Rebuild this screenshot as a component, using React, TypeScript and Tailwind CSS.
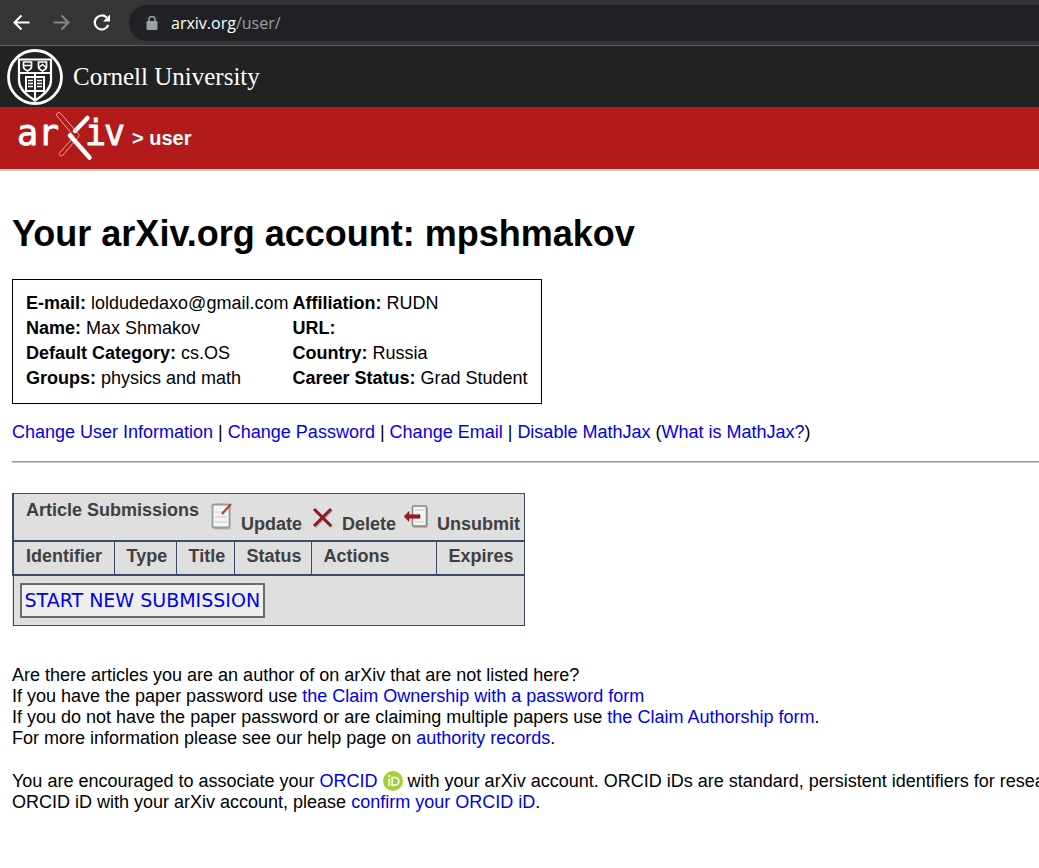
import React from "react";

const link = "text-[#0000ee]";

function BrowserBar() {
  return (
    <div className="flex h-[46px] items-center border-b border-[#5f5f5f] bg-[#353535] pl-3">
      <button aria-label="Back" className="flex w-10 text-white">
        <svg width="20" height="20" viewBox="0 0 20 20" fill="none" stroke="currentColor" strokeWidth="2">
          <path d="M17.500 9.500H2.500M9.500 2.500l-7 7 7 7" />
        </svg>
      </button>
      <button aria-label="Forward" className="flex w-10 text-[#878787]">
        <svg width="20" height="20" viewBox="0 0 20 20" fill="none" stroke="currentColor" strokeWidth="2">
          <path d="M1.500 9.500h15M9.500 2.500l7 7-7 7" />
        </svg>
      </button>
      <button aria-label="Reload" className="flex w-[37px] text-white">
        <svg width="20" height="20" viewBox="0 0 20 20" fill="none" stroke="currentColor" strokeWidth="2.200">
          <path d="M16.300 12A7 7 0 1 1 14.700 4.500" />
          <path d="M18 1.500v7h-7z" fill="currentColor" stroke="none" />
        </svg>
      </button>
      <div className="flex h-9 min-w-0 flex-1 items-center rounded-l-full bg-[#202124] pl-4">
        <svg className="mr-2 shrink-0" width="14" height="16" viewBox="0 0 14 16">
          <path d="M4 7V4.500a3 3 0 0 1 6 0V7" fill="none" stroke="#9aa0a6" strokeWidth="1.600" />
          <rect x="1.500" y="6" width="11" height="9" rx="1.200" fill="#9aa0a6" />
        </svg>
        <div className="grid min-w-0 flex-1 pl-1 font-['Open_Sans',sans-serif] text-base">
          <input
            aria-label="Address"
            type="text"
            className="col-start-1 row-start-1 min-w-0 bg-transparent text-transparent caret-white outline-none"
            defaultValue="arxiv.org/user/"
          />
          <span aria-hidden="true" className="pointer-events-none col-start-1 row-start-1 self-center text-[#9aa0a6]">
            <span className="text-white">arxiv.org</span>/user/
          </span>
        </div>
      </div>
    </div>
  );
}

function Seal() {
  return (
    <svg width="56" height="56" viewBox="0 0 56 56" fill="none" stroke="#fff">
      <circle cx="28" cy="28" r="26.500" strokeWidth="2.800" />
      <path d="M12 10.500h32v21c0 9-8 15-16 20C20 46.500 12 40.500 12 31.500z" strokeWidth="2.200" />
      <path d="M12 24h32M28 24v26" strokeWidth="2" />
      <path d="M16.500 13h8v5c0 2-2 3-4 4-2-1-4-2-4-4zM31.500 13h8v5c0 2-2 3-4 4-2-1-4-2-4-4z" strokeWidth="1.700" />
      <path d="M17 16.500h7M32 18.500l3.500-3 3.500 3" strokeWidth="1.500" />
      <path d="M19 28h8l1 1 1-1h8v14h-8l-1 1-1-1h-8z" strokeWidth="2" />
      <path d="M21 31.500h5M21 34.500h5M21 37.500h5M30 31.500h5M30 34.500h5M30 37.500h5" strokeWidth="1.500" />
    </svg>
  );
}

function ArxivLogo() {
  return (
    <svg width="110" height="54" viewBox="0 0 110 54" fill="none" role="img" aria-label="arXiv">
      <g fill="#fff" stroke="#fff" strokeWidth="0.800" fontFamily="DejaVu Sans Mono" fontSize="35" fontWeight="400">
        <text x="-1 20" y="34">ar</text>
        <text x="67 86" y="34">iv</text>
      </g>
      <path d="M69.500 7L57 20" stroke="#fff" strokeWidth="4.500" strokeLinecap="round" />
      <path
        d="M39.300 2c1-.9 2.500-.5 3.500.6L60.500 23c.8 1 .7 2-.1 3L45 44c-1 1-2 1.300-3 .5s-.8-2.100 0-3.100L56 25.500 39 5c-.8-1-.7-2.200.3-3z"
        stroke="#f0b0b0"
        strokeWidth="0.900"
      />
      <path d="M52 24.500L71.500 46.500" stroke="#fff" strokeWidth="4.500" strokeLinecap="round" />
    </svg>
  );
}

function Page({ className }: { className?: string }) {
  return (
    <svg className={className} width="24" height="30" viewBox="0 0 24 30">
      <rect x="4.500" y="5.500" width="17" height="24" rx="1.500" fill="#b8b8b8" />
      <rect x="3.500" y="4.500" width="17" height="23" rx="1.500" fill="#f4f4f4" stroke="#9a9a9a" strokeWidth="1.800" />
      <path d="M6 12h8M6 17h12M6 22h12" stroke="#c8c8c8" />
      <path d="M13 14l9-10" stroke="#b33c3c" strokeWidth="2.200" />
    </svg>
  );
}

function Cross({ className }: { className?: string }) {
  return (
    <svg className={className} width="22" height="24" viewBox="0 0 22 24" strokeWidth="3">
      <path d="M3 4l17 17M20 4L3 21" stroke="#a9a9a9" />
      <path d="M2 3l17 17M19 3L2 20" stroke="#8f1a1f" />
    </svg>
  );
}

function Unsubmit({ className }: { className?: string }) {
  return (
    <svg className={className} width="25" height="26" viewBox="0 0 25 26">
      <rect x="9" y="3" width="15" height="21" rx="1" fill="#b5b5b5" />
      <rect x="8.500" y="2" width="14" height="20" rx="1" fill="#f4f4f4" stroke="#858585" strokeWidth="1.500" />
      <path d="M11 6h9M11 18h9" stroke="#ccc" />
      <path d="M0 12.500l5-5v3.200h11v3.600H5v3.200z" fill="#a3181d" stroke="#6d1215" strokeWidth="0.500" />
    </svg>
  );
}

const profile = [
  ["E-mail:", "loldudedaxo@gmail.com", "Affiliation:", "RUDN"],
  ["Name:", "Max Shmakov", "URL:", ""],
  ["Default Category:", "cs.OS", "Country:", "Russia"],
  ["Groups:", "physics and math", "Career Status:", "Grad Student"],
];

export default function App() {
  return (
    <div className="min-h-screen overflow-x-hidden bg-white font-['Liberation_Sans',Arial,sans-serif] text-lg leading-[21px] text-black">
      <BrowserBar />
      <header>
        <div className="flex h-[61px] items-center bg-[#222] pl-[7px]">
          <a href="#cornell" className="flex items-center gap-2.5 text-white">
            <Seal />
            <span className="font-['Liberation_Serif',serif] text-[25px]">Cornell University</span>
          </a>
        </div>
        <div className="flex h-16 items-center border-b-2 border-[#ccc] bg-[#b31b1b] pl-[18px] font-bold text-white">
          <a href="#home" className="flex">
            <ArxivLogo />
          </a>
          <h2 className="pl-1 text-xl">&gt; user</h2>
        </div>
      </header>

      <main className="pl-3">
        <h1 className="pt-10 text-4xl leading-[45px] font-bold">Your arXiv.org account: mpshmakov</h1>

        <div className="mt-[23px] w-fit border border-black px-[13px] pt-[11px] pb-3">
          <table>
            <tbody>
              {profile.map(([a, b, c, d]) => (
                <tr key={a}>
                  <td className="h-[25px] p-0 pr-1 align-middle">
                    <b>{a}</b> {b}
                  </td>
                  <td className="p-0 align-middle">
                    <b>{c}</b> {d}
                  </td>
                </tr>
              ))}
            </tbody>
          </table>
        </div>

        <p className="mt-[18px]">
          <a href="#info" className={link}>Change User Information</a> |{" "}
          <a href="#password" className={link}>Change Password</a> |{" "}
          <a href="#email" className={link}>Change Email</a> |{" "}
          <a href="#mathjax" className={link}>Disable MathJax</a> (
          <a href="#about-mathjax" className={link}>What is MathJax?</a>)
        </p>
        <hr className="mt-[18px] border-t border-b border-t-[#9a9a9a] border-b-[#c8c8c8]" />

        <table className="mt-[30px] w-[512px] table-fixed border-collapse border border-[#3b4a6b] bg-[#dfdfdf] text-left font-bold text-[#404040]">
          <colgroup>
            <col className="w-[101px]" />
            <col className="w-[62px]" />
            <col className="w-[58px]" />
            <col className="w-[77px]" />
            <col className="w-[125px]" />
            <col className="w-[88px]" />
          </colgroup>
          <thead>
            <tr className="border-b-2 border-[#3b4a6b]">
              <th colSpan={6} className="h-[47px] border-l-2 border-[#3b4a6b] p-0 pl-3 align-top">
                <div className="flex items-start whitespace-nowrap">
                  <span className="pt-1.5">Article Submissions</span>
                  <Page className="ml-2.5 mt-1.5 shrink-0" />
                  <span className="ml-2 pt-5">Update</span>
                  <Cross className="ml-2.5 mt-3 shrink-0" />
                  <span className="ml-2 pt-5">Delete</span>
                  <Unsubmit className="ml-2 mt-2.5 shrink-0" />
                  <span className="ml-2 pt-5">Unsubmit</span>
                </div>
              </th>
            </tr>
            <tr className="border-b-2 border-[#3b4a6b]">
              {["Identifier", "Type", "Title", "Status", "Actions", "Expires"].map((t) => (
                <th
                  key={t}
                  className="h-[34px] border-r border-[#3b4a6b] p-0 pb-0.5 pl-3 first:border-l-2"
                >
                  {t}
                </th>
              ))}
            </tr>
          </thead>
          <tbody>
            <tr>
              <td colSpan={6} className="h-[51px] p-0 pl-1.5">
                <button className="block h-[35px] border-2 border-[#6b6b6b] bg-[#efefef] px-[3px] font-['DejaVu_Sans',sans-serif] text-[19px] font-normal text-[#0000ee]">
                  START NEW SUBMISSION
                </button>
              </td>
            </tr>
          </tbody>
        </table>

        <p className="mt-[39px] whitespace-nowrap">
          Are there articles you are an author of on arXiv that are not listed here?
          <br />
          If you have the paper password use <a href="#claim" className={link}>the Claim Ownership with a password form</a>
          <br />
          If you do not have the paper password or are claiming multiple papers use{" "}
          <a href="#authorship" className={link}>the Claim Authorship form</a>.
          <br />
          For more information please see our help page on <a href="#records" className={link}>authority records</a>.
        </p>

        <p className="mt-[22px] whitespace-nowrap">
          You are encouraged to associate your{" "}
          <a href="#orcid" className={link}>
            ORCID{" "}
            <svg className="inline-block align-[-4px]" width="20" height="20" viewBox="0 0 20 20">
              <circle cx="10" cy="10" r="10" fill="#a6ce39" />
              <path d="M6.200 7.500v7.500M9.200 6.500h2.800a3.800 3.800 0 0 1 0 7.600H9.200z" fill="none" stroke="#fff" strokeWidth="1.700" />
              <circle cx="6.200" cy="5" r="1.100" fill="#fff" />
            </svg>
          </a>{" "}
          with your arXiv account. ORCID iDs are standard, persistent identifiers for research authors.
          <br />
          ORCID iD with your arXiv account, please <a href="#confirm" className={link}>confirm your ORCID iD</a>.
        </p>
      </main>
    </div>
  );
}
